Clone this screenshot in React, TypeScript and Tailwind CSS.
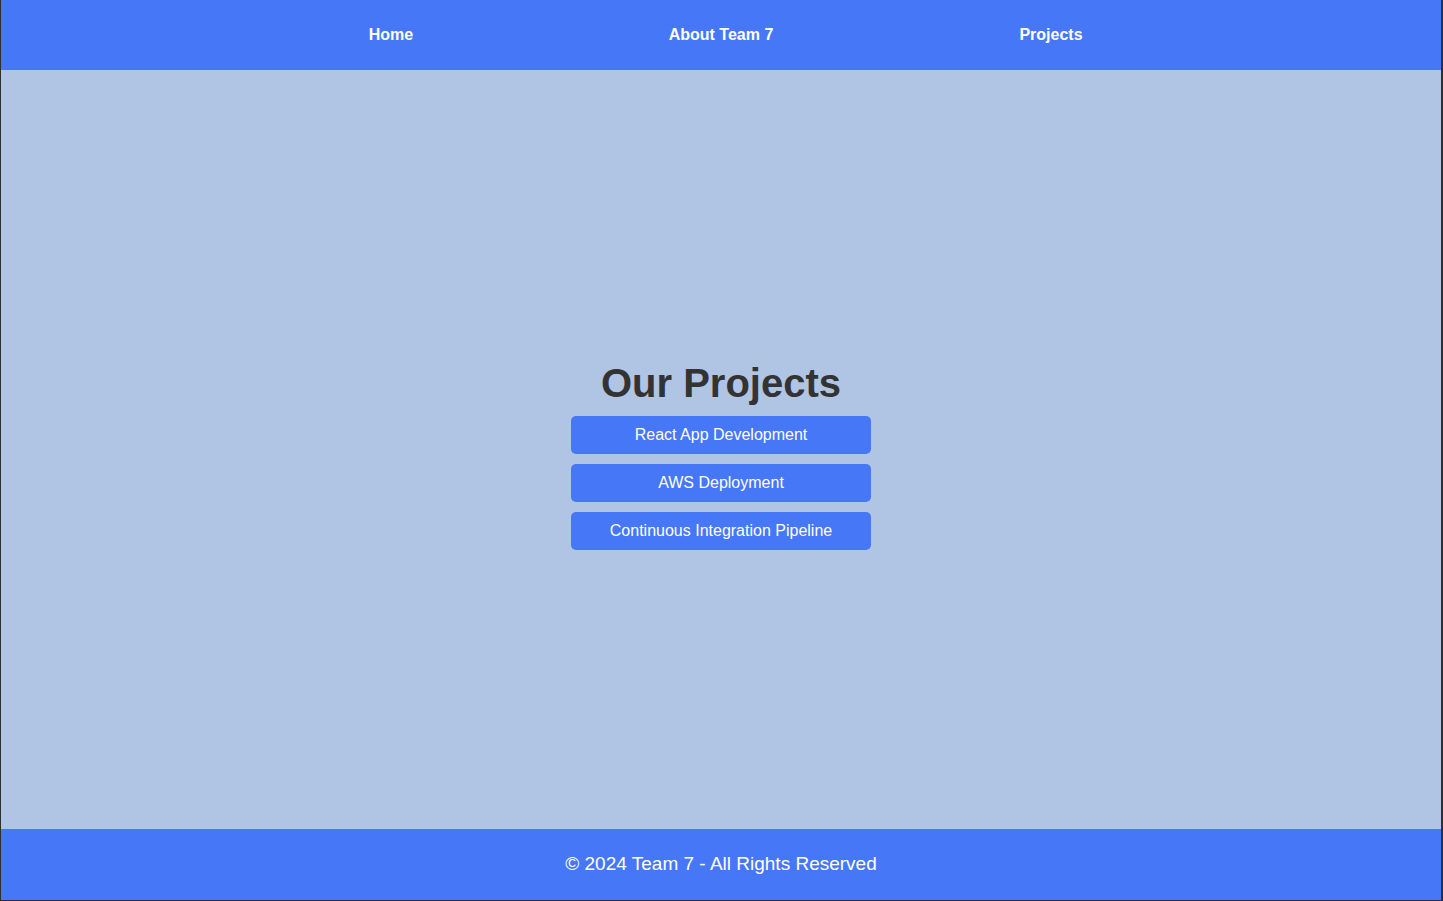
const projects = [
  "React App Development",
  "AWS Deployment",
  "Continuous Integration Pipeline",
];

const links = ["Home", "About Team 7", "Projects"];

export default function App() {
  return (
    <div className="flex h-[901px] flex-col border-b border-l border-r-2 border-[#2f2f2f] font-['Liberation_Sans',Arial,sans-serif]">
      <header className="flex h-[70px] shrink-0 items-center justify-center bg-[#4677f6]">
        <nav className="grid w-[990px] grid-cols-3">
          {links.map((l) => (
            <a key={l} href="#" className="text-center text-base font-bold text-white">
              {l}
            </a>
          ))}
        </nav>
      </header>

      <main className="flex flex-1 items-center justify-center bg-[#b0c4e3]">
        <div className="flex flex-col items-center pt-[21px]">
          <h2 className="mb-[10px] text-[40px] leading-[46px] font-bold text-[#333]">Our Projects</h2>
          {projects.map((p) => (
            <button
              key={p}
              className="mb-[10px] h-[38px] w-[300px] rounded-[5px] bg-[#4677f6] text-base text-white"
            >
              {p}
            </button>
          ))}
        </div>
      </main>

      <footer className="flex h-[71px] shrink-0 items-center justify-center bg-[#4677f6]">
        <p className="text-[19px] text-white">© 2024 Team 7 - All Rights Reserved</p>
      </footer>
    </div>
  );
}
